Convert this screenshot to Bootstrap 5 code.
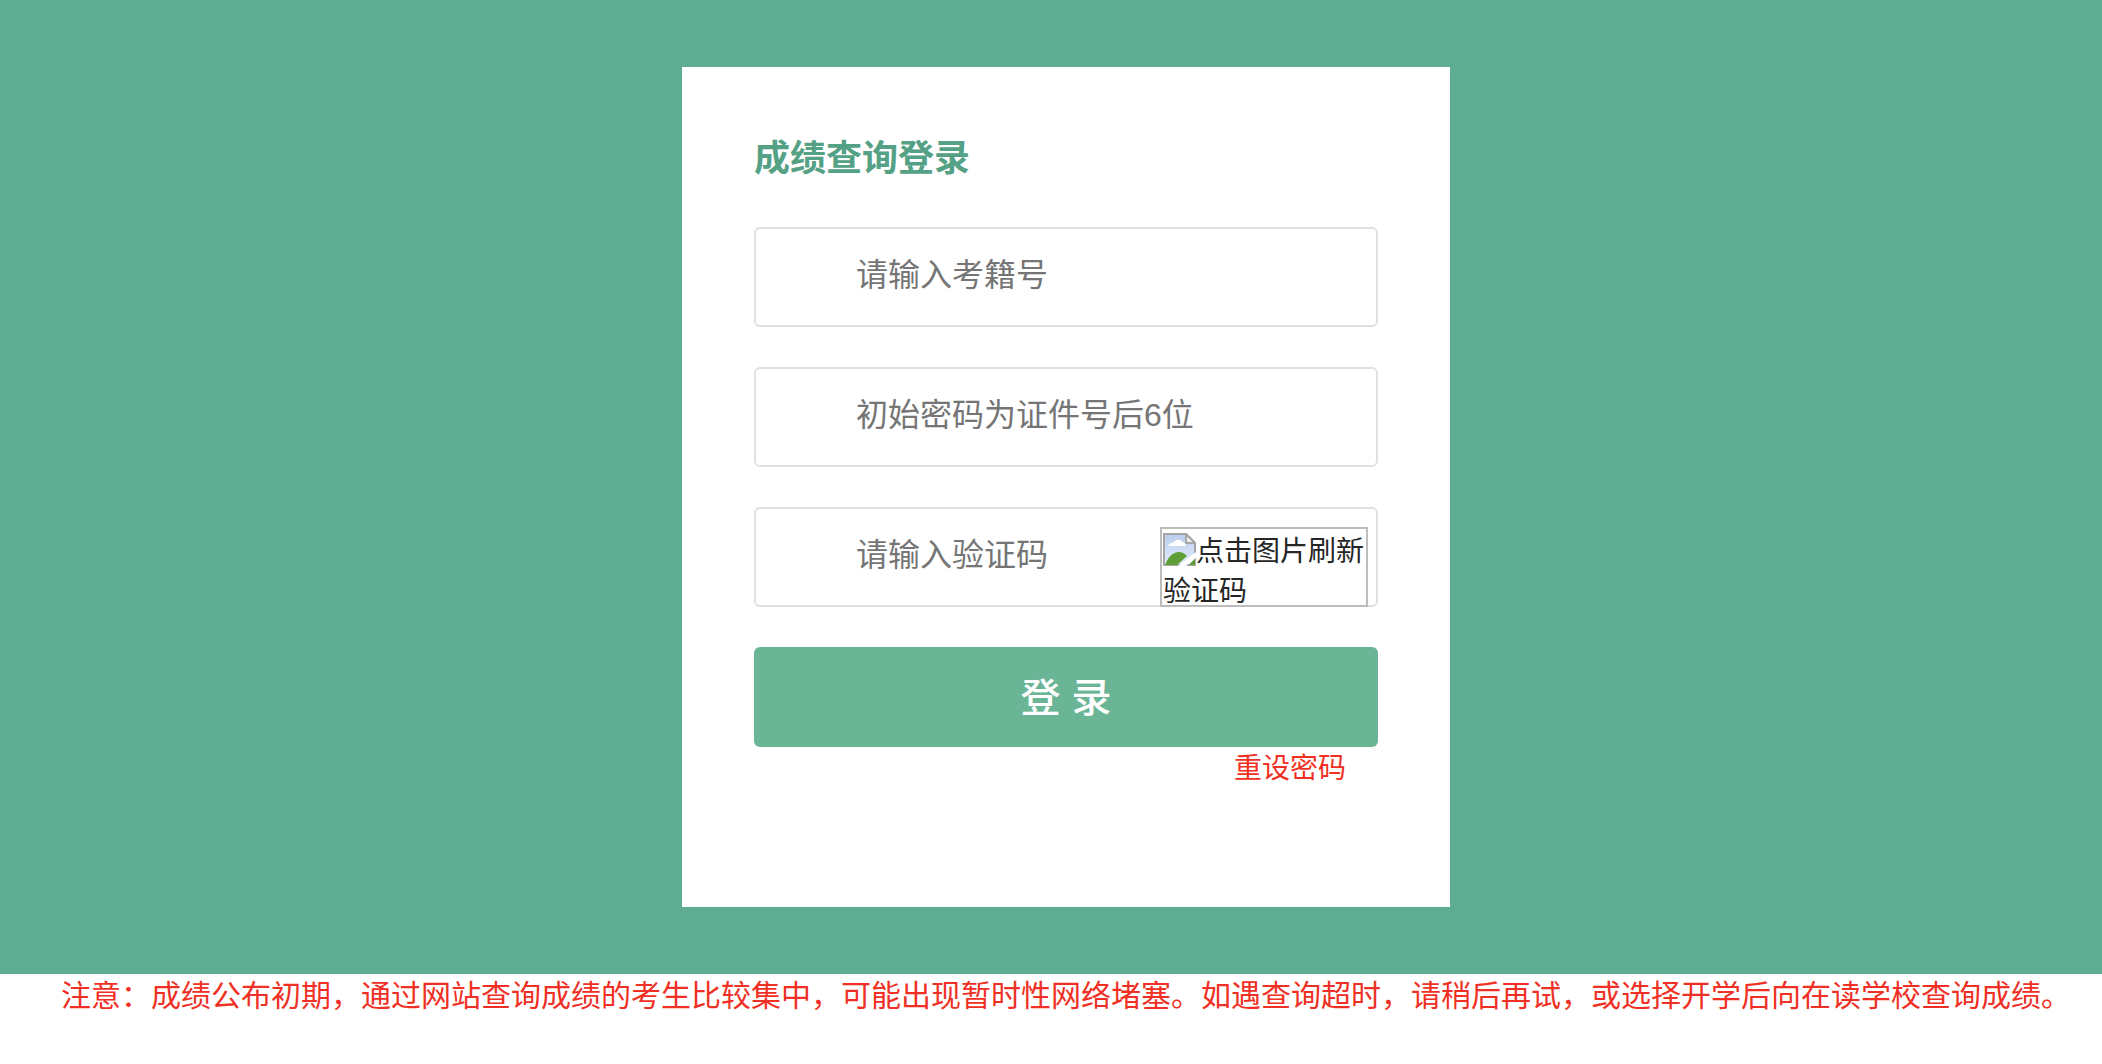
<!DOCTYPE html>
<html lang="zh">
<head>
<meta charset="utf-8">
<title>成绩查询登录</title>
<link href="https://cdn.jsdelivr.net/npm/bootstrap@5.3.0/dist/css/bootstrap.min.css" rel="stylesheet">
<style>
html,body{height:100%;overflow:hidden}
body{background:#fff;font-family:"Liberation Sans","Noto Sans CJK SC",sans-serif;color:#212121}
.stage{background:#5eac91;height:974px;padding:67px 0 0 30px}
.panel{width:768px;height:840px;background:#fff;padding:69px 72px 0;margin:0 auto}
.panel-title{font-size:36px;font-weight:700;line-height:46px;color:#55a186;margin:0 0 45px}
.field-box{position:relative;height:100px;margin-bottom:40px}
.field-input.form-control{height:100px;border:2px solid #e0e0e0;border-radius:6px;padding:0 20px 3px 100px;font-size:32px;color:#333;box-shadow:none}
.field-input.form-control::placeholder{color:#757575;opacity:1}
.captcha-alt{position:absolute;left:406px;top:20px;width:208px;height:80px;border:2px solid #bdbdbd;overflow:hidden;font-size:28px;line-height:40px;padding:3px 1px 0;background:#fff;color:#262626;cursor:pointer}
.broken-ico{width:33px;height:33px;vertical-align:-5px}
.submit-btn.btn{height:100px;border:0;border-radius:6px;background:#6bb597;color:#fff;font-size:40px;font-weight:500;line-height:1;padding:2px 0 0}
.reset-row{padding-right:32px;line-height:44px}
.reset-link{font-size:28px;color:#f03024;text-decoration:none}
.note{font-size:30px;line-height:44px;color:#f03024;padding-left:30px;text-align:center;white-space:nowrap}
</style>
</head>
<body>
<div class="stage">
  <div class="panel">
    <h1 class="panel-title">成绩查询登录</h1>
    <form>
      <div class="field-box"><input class="form-control field-input" type="text" placeholder="请输入考籍号"></div>
      <div class="field-box"><input class="form-control field-input" type="password" placeholder="初始密码为证件号后6位"></div>
      <div class="field-box"><input class="form-control field-input" type="text" placeholder="请输入验证码">
        <div class="captcha-alt"><svg class="broken-ico" viewBox="0 0 33 33" role="img" aria-hidden="true"><defs><linearGradient id="sky" x1="0" y1="0" x2="0" y2="1"><stop offset="0" stop-color="#b9cdee"/><stop offset="1" stop-color="#e4ecfb"/></linearGradient></defs><path d="M1 1H23L32 10V32H1Z" fill="url(#sky)" stroke="#a6a6a6" stroke-width="2"/><path d="M23 1V10H32Z" fill="#eee" stroke="#a6a6a6" stroke-width="2" stroke-linejoin="round"/><path d="M5 13c1-3 4-3 6-4 2-3 6-3 8 0 2 0 4 2 4 4z" fill="#fff"/><path d="M2 32C5 24 10 19 16 19c3 0 6 2 8 4L14 32Z" fill="#5f9f35"/><path d="M26 32L32 25V32Z" fill="#5f9f35"/><path d="M15 33L33 19V25L23 33Z" fill="#fff"/></svg>点击图片刷新验证码</div>
      </div>
      <button type="button" class="btn submit-btn w-100">登 录</button>
      <div class="reset-row text-end"><a class="reset-link" href="#">重设密码</a></div>
    </form>
  </div>
</div>
<div class="note">注意&#xFF1A;成绩公布初期&#xFF0C;通过网站查询成绩的考生比较集中&#xFF0C;可能出现暂时性网络堵塞。如遇查询超时&#xFF0C;请稍后再试&#xFF0C;或选择开学后向在读学校查询成绩。</div>
</body>
</html>
